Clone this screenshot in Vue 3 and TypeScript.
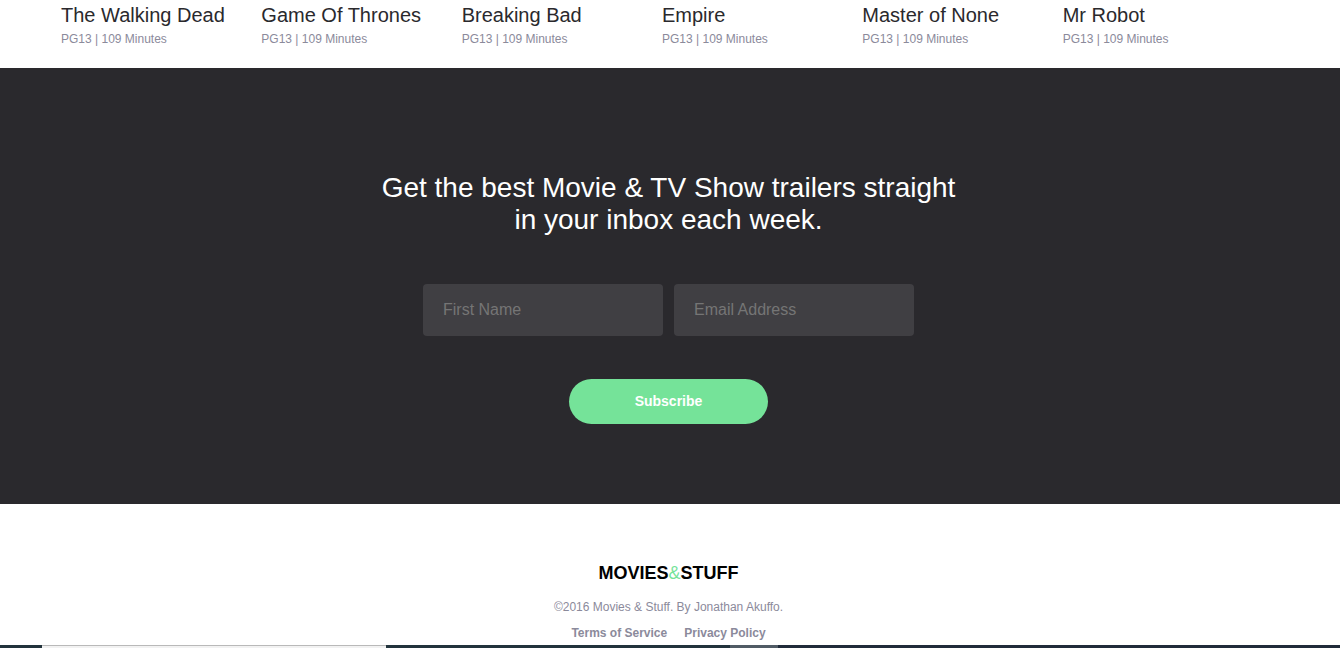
<script setup lang="ts">
import { ref } from 'vue'

interface Show {
  title: string
  meta: string
}

const shows: Show[] = [
  'The Walking Dead',
  'Game Of Thrones',
  'Breaking Bad',
  'Empire',
  'Master of None',
  'Mr Robot',
].map((title) => ({ title, meta: 'PG13 | 109 Minutes' }))

const firstName = ref('')
const email = ref('')
</script>

<template>
  <div class="page">
    <ul class="shows">
      <li v-for="show in shows" :key="show.title">
        <h3>{{ show.title }}</h3>
        <p>{{ show.meta }}</p>
      </li>
    </ul>

    <section class="newsletter">
      <h2>Get the best Movie &amp; TV Show trailers straight in your inbox each week.</h2>
      <form @submit.prevent>
        <div class="fields">
          <input v-model="firstName" type="text" placeholder="First Name" aria-label="First Name" />
          <input v-model="email" type="email" placeholder="Email Address" aria-label="Email Address" />
        </div>
        <button type="submit">Subscribe</button>
      </form>
    </section>

    <footer>
      <div class="logo">MOVIES<span>&amp;</span>STUFF</div>
      <p>©2016 Movies &amp; Stuff. By Jonathan Akuffo.</p>
      <nav>
        <a href="#terms">Terms of Service</a>
        <a href="#privacy">Privacy Policy</a>
      </nav>
    </footer>

    <div class="taskbar" aria-hidden="true">
      <span class="start"></span>
      <span class="search"></span>
      <span class="apps"></span>
      <span class="active"></span>
      <span class="rest"></span>
    </div>
  </div>
</template>

<style>
body {
  margin: 0;
  background: #fff;
}
</style>

<style scoped>
.page {
  display: flex;
  flex-direction: column;
  min-height: 100vh;
  font-family: 'Liberation Sans', Arial, sans-serif;
  color: #2a292d;
}

h2,
h3,
p,
ul {
  margin: 0;
  padding: 0;
}

.shows {
  display: grid;
  grid-template-columns: repeat(6, 1fr);
  padding: 3px 77px 20px 61px;
  list-style: none;
}

.shows h3 {
  font-size: 20px;
  line-height: 24px;
  font-weight: 400;
  white-space: nowrap;
}

.shows p {
  margin-top: 4px;
  font-size: 12px;
  line-height: 17px;
  color: #8b8a9b;
}

.newsletter {
  display: flex;
  flex-direction: column;
  align-items: center;
  padding: 104px 3px 80px 0;
  background: #2a292d;
}

.newsletter h2 {
  max-width: 600px;
  font-size: 28px;
  line-height: 32px;
  font-weight: 400;
  text-align: center;
  color: #fff;
}

form {
  display: flex;
  flex-direction: column;
  align-items: center;
  gap: 43px;
  margin-top: 48px;
}

.fields {
  display: flex;
  gap: 11px;
}

input {
  box-sizing: border-box;
  width: 240px;
  height: 52px;
  padding: 0 20px;
  border: 0;
  border-radius: 4px;
  background: #403f43;
  font-family: inherit;
  font-size: 16px;
  color: #fff;
}

input::placeholder {
  color: #757575;
  opacity: 1;
}

button {
  width: 199px;
  height: 45px;
  padding: 0 0 2px;
  border: 0;
  border-radius: 23px;
  background: #75e399;
  font-family: inherit;
  font-size: 14px;
  font-weight: 700;
  color: #fff;
  cursor: pointer;
}

footer {
  display: flex;
  flex-direction: column;
  align-items: center;
  padding: 58px 3px 4px 0;
  font-size: 12px;
  line-height: 16px;
  color: #8b8a9b;
}

.logo {
  font-size: 18px;
  line-height: 22px;
  font-weight: 700;
  color: #000;
}

.logo span {
  font-weight: 400;
  color: #75e399;
}

footer p {
  margin-top: 15px;
}

nav {
  display: flex;
  gap: 17px;
  margin-top: 10px;
}

nav a {
  font-weight: 700;
  color: inherit;
  text-decoration: none;
}

.taskbar {
  display: flex;
  height: 3px;
  margin-top: auto;
  background: #22333c;
}

.start {
  width: 42px;
}

.search {
  box-sizing: border-box;
  width: 344px;
  border-top: 1px solid #b9b9b9;
  background: #f2f2f2;
}

.apps {
  width: 344px;
}

.active {
  width: 48px;
  background: #505b65;
}

.rest {
  flex: 1;
  background: #202b3a;
}
</style>
